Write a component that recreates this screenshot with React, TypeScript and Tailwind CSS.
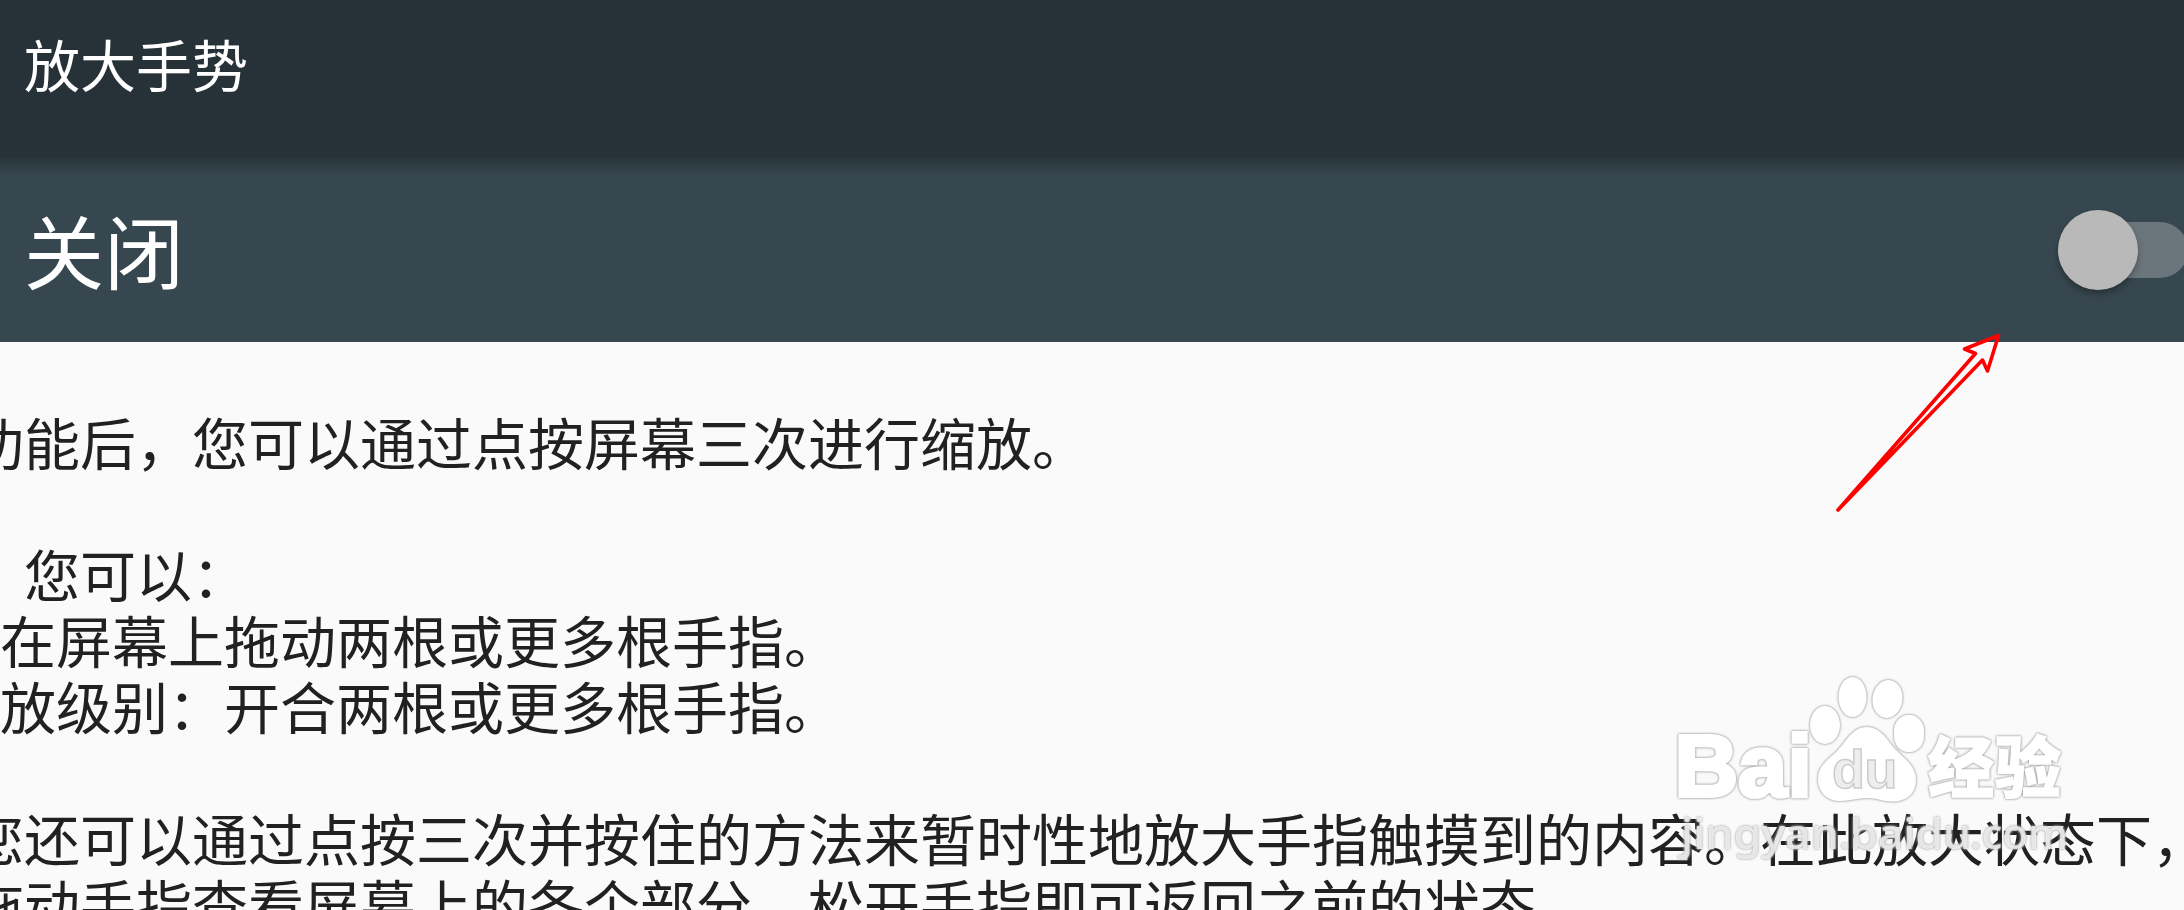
const lines = [
  { text: '功能后，您可以通过点按屏幕三次进行缩放。', indent: '-ml-8' },
  { text: '', indent: 'ml-0' },
  { text: '您可以：', indent: 'ml-6' },
  { text: '在屏幕上拖动两根或更多根手指。', indent: 'ml-0' },
  { text: '放级别：开合两根或更多根手指。', indent: 'ml-0' },
  { text: '', indent: 'ml-0' },
  { text: '您还可以通过点按三次并按住的方法来暂时性地放大手指触摸到的内容。在此放大状态下，', indent: '-ml-8' },
  { text: '拖动手指查看屏幕上的各个部分。松开手指即可返回之前的状态。', indent: '-ml-8' },
];

function Header() {
  return (
    <header className="h-[158px] shrink-0 bg-[#263238] pt-[23px] pl-6">
      <h1 className="text-[56px] leading-[80px] text-white">放大手势</h1>
    </header>
  );
}

function Switch() {
  return (
    <button role="switch" aria-checked="false" className="-mr-1 flex h-20 w-[130px] shrink-0 items-center">
      <span className="flex h-14 w-full items-center rounded-full bg-[#6b767c]">
        <span className="h-20 w-20 shrink-0 rounded-full bg-[#b9b9b9] shadow-[0_4px_6px_rgba(0,0,0,0.3)]" />
      </span>
    </button>
  );
}

function Arrow() {
  return (
    <svg className="absolute top-[320px] left-[1820px]" width="200" height="200" viewBox="1820 320 200 200">
      <path
        d="M1838 510 L1975.500 353.500 L1964.500 349 L1998.500 335.500 L1987.500 371 L1982.500 360 Z"
        fill="none"
        stroke="#ff0000"
        strokeWidth="3.600"
        strokeLinejoin="round"
      />
    </svg>
  );
}

function Watermark() {
  return (
    <svg
      className="absolute top-[660px] left-[1660px] [filter:drop-shadow(0_0_1px_#999)_drop-shadow(0_0_1px_#ccc)]"
      width="430"
      height="210"
      viewBox="1660 660 430 210"
      fill="#fff"
    >
      <text x="1674.500 1738 1787.500" y="796" fontSize="88" fontWeight="700" fontFamily="Liberation Sans" stroke="#fff" strokeWidth="4">
        Bai
      </text>
      <ellipse cx="1825" cy="725" rx="15" ry="19" />
      <ellipse cx="1852.500" cy="697" rx="14" ry="20" />
      <ellipse cx="1887.500" cy="699" rx="15" ry="19" transform="rotate(8 1887.500 699)" />
      <rect x="1894" y="715" width="30" height="37" rx="14" ry="16" />
      <path d="M1866.500 727 C1881 727 1887 740 1896 750 C1905 759 1916 766 1916 780 C1916 794 1906 801.500 1893 801.500 C1882 801.500 1877 798 1867 798 C1857 798 1851 801 1840 801 C1826 801 1818 791 1818 779 C1818 765 1829 759 1838 750 C1847 740 1853 727 1866.500 727 Z" />
      <text x="1832 1864.500" y="788" fontSize="54" fontWeight="700" fontFamily="Liberation Sans" fill="#eee" stroke="#ccc" strokeWidth="1.500">
        du
      </text>
      <text x="1928 1995" y="792" fontSize="66" fontWeight="900" fontFamily="Noto Sans CJK SC" stroke="#fff" strokeWidth="1.500">
        经验
      </text>
      <text y="848.500" fontSize="42" fontWeight="500" fontFamily="Noto Sans" fillOpacity="0.7">
        <tspan x="1681" textLength="158" lengthAdjust="spacingAndGlyphs">jingyan</tspan>
        <tspan x="1839">.</tspan>
        <tspan x="1850" textLength="121" lengthAdjust="spacingAndGlyphs">baidu</tspan>
        <tspan x="1970" textLength="98" lengthAdjust="spacingAndGlyphs">.com</tspan>
      </text>
    </svg>
  );
}

export default function App() {
  return (
    <div className="relative flex h-[910px] w-[2184px] flex-col overflow-hidden bg-[#fafafa] font-['Noto_Sans_CJK_SC',sans-serif]">
      <Header />
      <div className="flex h-[184px] shrink-0 items-center justify-between bg-[#37474f] bg-[linear-gradient(rgba(0,0,0,0.25),transparent_18px)] pl-6">
        <span className="-mt-[5px] text-[80px] leading-[112px] text-white">关闭</span>
        <Switch />
      </div>
      <main className="pt-[66px] text-[56px] leading-[66px] whitespace-nowrap text-[#212121]">
        {lines.map((line, i) => (
          <p key={i} className={`h-[66px] ${line.indent}`}>
            {line.text}
          </p>
        ))}
      </main>
      <Arrow />
      <Watermark />
    </div>
  );
}
